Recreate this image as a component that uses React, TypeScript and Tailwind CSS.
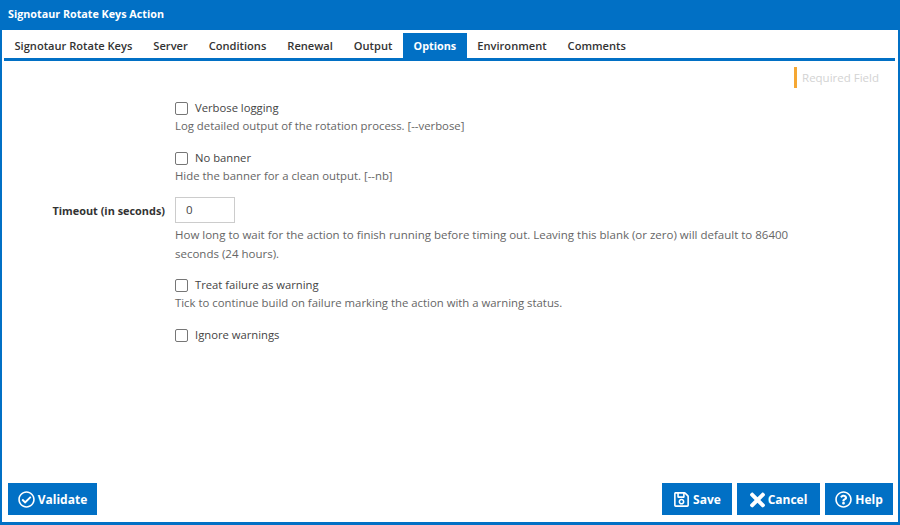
import { FaRegCheckCircle, FaRegQuestionCircle, FaRegSave, FaTimes } from 'react-icons/fa'

const tabs = ['Signotaur Rotate Keys', 'Server', 'Conditions', 'Renewal', 'Output', 'Options', 'Environment', 'Comments']

function CheckRow({ label, help, className }: { label: string; help?: string; className?: string }) {
  return (
    <div className={className}>
      <label className="flex h-[20px] items-center">
        <span className="h-[13px] w-[13px] rounded-[2px] border border-[#767676] bg-white" />
        <span className="ml-[7px] text-[11.25px] text-[#444]">{label}</span>
      </label>
      {help && <p className="-mt-[1px] text-[11.35px] leading-[18px] text-[#666]">{help}</p>}
    </div>
  )
}

function ActionButton({ icon, label, className }: { icon: React.ReactNode; label: string; className: string }) {
  return (
    <button className={`flex h-[32px] items-center justify-center gap-[3px] bg-[#0170c5] pt-[1px] text-[12px] font-bold text-white ${className}`}>
      {icon}
      {label}
    </button>
  )
}

export default function App() {
  return (
    <div className="flex h-[525px] w-[900px] flex-col border-r-[2px] border-b-[3px] border-l-[2px] border-[#0170c5] bg-white font-['Open_Sans',sans-serif] text-[11.5px]">
      <div className="-mx-[2px] flex h-[30px] shrink-0 items-center bg-[#0170c5] pb-[2px] pl-[8px] text-[10.75px] font-bold text-white">
        Signotaur Rotate Keys Action
      </div>

      <div className="mt-[3px] mr-[3px] ml-[2px] flex h-[28px] shrink-0 border-b-[3px] border-[#0170c5]">
        {tabs.map((tab) => (
          <div
            key={tab}
            className={
              tab === 'Options'
                ? 'flex w-[64px] items-center justify-center bg-[#0170c5] pt-[1px] text-[10.8px] font-bold text-white'
                : 'flex items-center px-[10.5px] pt-[1px] text-[11.1px] font-semibold text-[#333]'
            }
          >
            {tab}
          </div>
        ))}
      </div>

      <div className="flex flex-1 flex-col">
        <div className="flex justify-end pt-[6px] pr-[19px]">
          <div className="flex h-[21px] items-center border-l-[3px] border-[#f5a733] pl-[5px] text-[#d3d3d3]">Required Field</div>
        </div>

        <div className="pl-[173px]">
          <CheckRow className="mt-[10px]" label="Verbose logging" help="Log detailed output of the rotation process. [--verbose]" />
          <CheckRow className="mt-[13px]" label="No banner" help="Hide the banner for a clean output. [--nb]" />

          <div className="relative mt-[12px]">
            <span className="absolute top-[6px] right-full mr-[10px] whitespace-nowrap text-[10.9px] font-bold text-[#333]">Timeout (in seconds)</span>
            <div className="flex h-[26px] w-[60px] items-center border border-[#ccc] pl-[10px] text-[#444]">0</div>
          </div>
          <p className="mt-[2px] w-[640px] text-[11.5px] leading-[19px] text-[#666]">
            How long to wait for the action to finish running before timing out. Leaving this blank (or zero) will default to 86400 seconds (24 hours).
          </p>

          <CheckRow className="mt-[12px]" label="Treat failure as warning" help="Tick to continue build on failure marking the action with a warning status." />
          <CheckRow className="mt-[13px]" label="Ignore warnings" />
        </div>

        <div className="mt-auto flex justify-between pr-[5px] pb-[7px] pl-[6px]">
          <ActionButton className="w-[89px]" icon={<FaRegCheckCircle className="h-[17px] w-[17px]" />} label="Validate" />
          <div className="flex gap-[5px]">
            <ActionButton className="w-[70px]" icon={<FaRegSave className="h-[17px] w-[17px]" />} label="Save" />
            <ActionButton className="w-[83px]" icon={<FaTimes className="h-[22px] w-[15px]" />} label="Cancel" />
            <ActionButton className="w-[68px]" icon={<FaRegQuestionCircle className="h-[17px] w-[17px]" />} label="Help" />
          </div>
        </div>
      </div>
    </div>
  )
}
